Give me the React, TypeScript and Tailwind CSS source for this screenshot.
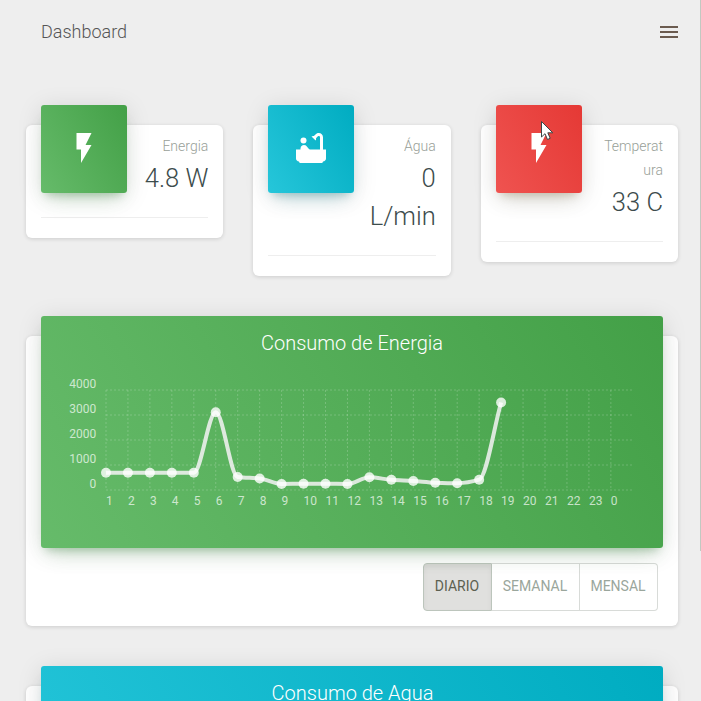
import { MdBathtub, MdFlashOn } from "react-icons/md";
import type { ReactNode } from "react";

const GREEN =
  "bg-[linear-gradient(60deg,#66bb6a,#43a047)] shadow-[0_12px_20px_-10px_rgba(76,175,80,0.28),0_4px_25px_0_rgba(0,0,0,0.13),0_7px_8px_-5px_rgba(60,130,70,0.3)]";
const CYAN =
  "bg-[linear-gradient(60deg,#26c6da,#00acc1)] shadow-[0_12px_20px_-10px_rgba(0,150,170,0.25),0_4px_25px_0_rgba(0,0,0,0.13),0_7px_8px_-5px_rgba(60,130,130,0.3)]";
const RED =
  "bg-[linear-gradient(60deg,#ef5350,#e53935)] shadow-[0_12px_20px_-10px_rgba(140,130,90,0.25),0_4px_25px_0_rgba(0,0,0,0.13),0_7px_8px_-5px_rgba(150,130,80,0.3)]";
const CARD = "rounded-md bg-white shadow-[0_1px_4px_0_rgba(0,0,0,0.14)]";

function StatCard({ tone, icon, label, value }: { tone: string; icon: ReactNode; label: string; value: string }) {
  return (
    <div className={`${CARD} w-[197.5px] px-[15px]`}>
      <div className="flex justify-between">
        <div className={`${tone} -mt-5 flex h-[88px] w-[86px] shrink-0 items-center justify-center rounded-[3px] pb-[2px] text-white`}>
          {icon}
        </div>
        <div className="w-[66px] pt-[9px] text-right font-light">
          <p className="text-[14px] leading-6 break-words text-[#98a098]">{label}</p>
          <h3 className="pt-px text-[25.55px] leading-[38px] text-[#3c4c4c]">{value}</h3>
        </div>
      </div>
      <div className="mt-5 mb-5 border-t border-[#eeeeee]" />
    </div>
  );
}

const X0 = 65;
const STEP = 21.95;
const TOP = 74;
const points = [
  156.7, 156.7, 156.7, 156.7, 156.7, 96.3, 161, 162.5, 168, 167.7, 167.7, 168, 161.3, 163.8, 165, 166.7, 167.2, 163.7,
  86.5,
];
const hours = [...Array.from({ length: 23 }, (_, i) => String(i + 1)), "0"];

// Monotone cubic interpolation through evenly spaced points.
function smoothPath(ys: number[]) {
  const slopes = ys.slice(1).map((y, i) => y - ys[i]);
  const tangents = ys.map((_, i) => {
    if (i === 0) return slopes[0];
    if (i === ys.length - 1) return slopes[i - 1];
    const a = slopes[i - 1];
    const b = slopes[i];
    return a * b <= 0 ? 0 : (2 * a * b) / (a + b);
  });
  return ys.slice(1).reduce((d, y, i) => {
    const x = X0 + i * STEP;
    return `${d} C${x + STEP / 3} ${ys[i] + tangents[i] / 3} ${x + (2 * STEP) / 3} ${y - tangents[i + 1] / 3} ${x + STEP} ${y}`;
  }, `M${X0} ${ys[0]}`);
}

function EnergyChart() {
  return (
    <svg width="622" height="232" className="absolute inset-0">
      <g stroke="rgba(255,255,255,0.2)" strokeDasharray="2">
        {hours.map((h, i) => (
          <line key={h} x1={X0 + i * STEP} x2={X0 + i * STEP} y1={TOP} y2={TOP + 100} />
        ))}
        {[0, 1, 2, 3, 4].map((i) => (
          <line key={i} x1={X0} x2={X0 + 24 * STEP} y1={TOP + i * 25} y2={TOP + i * 25} />
        ))}
      </g>
      <path d={smoothPath(points)} fill="none" stroke="rgba(250,245,250,0.82)" strokeWidth="4" />
      {points.map((y, i) => (
        <circle key={i} cx={X0 + i * STEP} cy={y} r="5" fill="rgba(255,255,255,0.8)" />
      ))}
      <g fill="rgba(255,255,255,0.7)" fontSize="12">
        {[4000, 3000, 2000, 1000, 0].map((v, i) => (
          <text key={v} x="55.3" y={72 + i * 25} textAnchor="end">
            {v}
          </text>
        ))}
        {hours.map((h, i) => (
          <text key={h} x={X0 + i * STEP} y="189">
            {h}
          </text>
        ))}
      </g>
    </svg>
  );
}

export default function App() {
  return (
    <div className="relative h-[701px] w-[701px] overflow-hidden bg-[#eeeeee] font-['Roboto',sans-serif]">
      <header className="flex h-16 items-center justify-between pr-[23px] pl-[41px]">
        <h1 className="pb-[2px] text-[18px] font-light text-[#555555]">Dashboard</h1>
        <button aria-label="Menu" className="flex w-[18px] flex-col gap-[3px]">
          <span className="h-[2px] bg-[#6b5b4f]" />
          <span className="h-[2px] bg-[#6b5b4f]" />
          <span className="h-[2px] bg-[#6b5b4f]" />
        </button>
      </header>

      <main className="pr-[23px] pl-[26px]">
        <section className="flex h-[272px] items-start gap-[30px] pt-[61px]">
          <StatCard tone={GREEN} icon={<MdFlashOn size={36} />} label="Energia" value="4.8 W" />
          <StatCard tone={CYAN} icon={<MdBathtub size={36} />} label="Água" value="0 L/min" />
          <StatCard tone={RED} icon={<MdFlashOn size={36} />} label="Temperatura" value="33 C" />
        </section>

        <section className={`${CARD} flex h-[290px] flex-col px-[15px]`}>
          <div className={`${GREEN} relative -mt-5 h-[232px] shrink-0 rounded-[3px]`}>
            <h2 className="pt-[13px] text-center text-[20px] leading-7 font-light text-white">Consumo de Energia</h2>
            <EnergyChart />
          </div>
          <div className="mt-[15px] mr-[5px] flex h-12 self-end text-[14px] text-[#9aa69c]">
            <button className="w-[69px] rounded-l-[4px] border border-[#bcc5bc] bg-[#e0e0de] pr-px pb-[2px] text-[#5c6050] shadow-[inset_0_3px_5px_rgba(0,0,0,0.05)]">
              DIARIO
            </button>
            <button className="w-[88px] border-y border-r border-[#d8dbd8] pr-px pb-[2px]">SEMANAL</button>
            <button className="w-[78px] rounded-r-[4px] border-y border-r border-[#d8dbd8] pr-px pb-[2px]">MENSAL</button>
          </div>
        </section>

        <section className={`${CARD} mt-[60px] h-[290px] px-[15px]`}>
          <div className={`${CYAN} relative -top-5 h-[232px] rounded-[3px]`}>
            <h2 className="pt-[13px] pl-px text-center text-[20px] leading-7 font-light text-white">Consumo de Agua</h2>
          </div>
        </section>
      </main>

      <div className="absolute top-0 right-0 h-[551px] w-px bg-[#c1c9c1]" />
      <svg width="13" height="20" viewBox="0 0 13 20" className="absolute top-[121px] left-[541px]">
        <path d="M.5 .5V16L4 12.7L6.5 18.5L9.2 17.3L6.8 11.8H11.8Z" fill="white" stroke="#3c4848" />
      </svg>
    </div>
  );
}
